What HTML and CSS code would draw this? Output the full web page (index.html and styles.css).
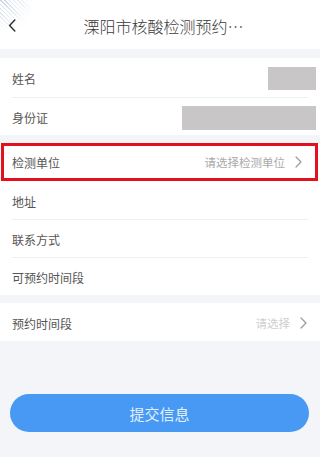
FILE: index.html
```html
<!DOCTYPE html>
<html lang="zh-CN">
<head>
<meta charset="utf-8">
<link rel="stylesheet" href="styles.css">
</head>
<body>
<div class="page">
  <header class="header">
    <span class="back">
      <svg width="8" height="13" viewBox="0 0 8 13"><path d="M6.8 1 L1.6 6.5 L6.8 12" fill="none" stroke="#333" stroke-width="1.5" stroke-linecap="round" stroke-linejoin="round"/></svg>
    </span>
    <div class="title">溧阳市核酸检测预约…</div>
  </header>

  <section class="group g1">
    <div class="row">
      <span class="label">姓名</span>
      <span class="mask mask-name"></span>
    </div>
    <div class="row">
      <span class="label">身份证</span>
      <span class="mask mask-id"></span>
    </div>
  </section>

  <section class="group g2">
    <div class="row row-hl">
      <span class="label">检测单位</span>
      <span class="pick">请选择检测单位<svg class="chev" width="7" height="12" viewBox="0 0 7 12"><path d="M1 1 L6 6 L1 11" fill="none" stroke="#999" stroke-width="1.2" stroke-linecap="round" stroke-linejoin="round"/></svg></span>
    </div>
    <div class="row">
      <span class="label">地址</span>
    </div>
    <div class="row">
      <span class="label">联系方式</span>
    </div>
    <div class="row">
      <span class="label">可预约时间段</span>
    </div>
  </section>

  <section class="group g3">
    <div class="row">
      <span class="label">预约时间段</span>
      <span class="pick light">请选择<svg class="chev" width="7" height="12" viewBox="0 0 7 12"><path d="M1 1 L6 6 L1 11" fill="none" stroke="#999" stroke-width="1.2" stroke-linecap="round" stroke-linejoin="round"/></svg></span>
    </div>
  </section>

  <div class="actions">
    <button class="submit">提交信息</button>
  </div>
</div>
</body>
</html>
```

FILE: styles.css
```css
html, body {
  margin: 0;
  padding: 0;
  background: #f4f5f9;
}
body {
  font-family: "Noto Sans CJK SC", "Noto Sans", sans-serif;
  width: 320px;
  height: 457px;
  overflow: hidden;
}
.page {
  display: flex;
  flex-direction: column;
}
.header {
  height: 49px;
  display: flex;
  align-items: center;
  background:
    radial-gradient(circle at 0 0, rgba(255,255,255,0) 0, #fff 34px),
    repeating-linear-gradient(45deg, #c9d3ea 0 1px, rgba(255,255,255,0) 1px 3px),
    #fff;
  background-repeat: no-repeat;
  background-size: 40px 30px, 40px 30px, auto;
  padding: 0 0 0 8px;
  margin-bottom: 9px;
}
.back {
  display: flex;
  width: 10px;
  padding-top: 1px;
}
.title {
  flex: 1;
  text-align: center;
  font-size: 16px;
  font-weight: 300;
  color: #3a3a3a;
  padding: 0 0 0 7px;
  margin-right: 18px;
  padding-top: 2px;
}
.group {
  background: #fff;
  display: flex;
  flex-direction: column;
}
.g1 { margin-bottom: 8px; }
.g2 { margin-bottom: 8px; }
.row {
  box-sizing: border-box;
  height: 38px;
  margin: 0 12px;
  padding-top: 2px;
  display: flex;
  align-items: center;
  justify-content: space-between;
  border-top: 1px solid #eeeff2;
}
.g1 .row:first-child,
.g2 .row:nth-child(2),
.g3 .row { border-top: none; }
.g1 .row:first-child { height: 39px; }
.row-hl {
  margin: 0 2px 0 1px;
  padding: 0 13px 0 8px;
  border: 3px solid #e3101d !important;
  height: 38px;
}
.label {
  font-size: 12px;
  color: #555;
}
.mask {
  background: #c8c6c7;
  height: 23px;
}
.mask-name { width: 48px; margin-right: -8px; }
.mask-id { width: 134px; height: 24px; margin-right: -8px; }
.pick {
  display: flex;
  align-items: center;
  font-size: 11.5px;
  color: #a9a9a9;
}
.pick.light { color: #cfcfcf; }
.chev { margin-left: 10px; margin-right: 0; }
.g3 .chev { margin-right: 1px; margin-left: 10px; }
.actions {
  padding: 53px 11px 0 10px;
}
.submit {
  width: 100%;
  height: 38px;
  border: none;
  border-radius: 19px;
  background: #4799f3;
  color: #e3efff;
  font-family: "Noto Sans CJK SC", sans-serif;
  font-size: 15px;
  padding: 0;
}
```
